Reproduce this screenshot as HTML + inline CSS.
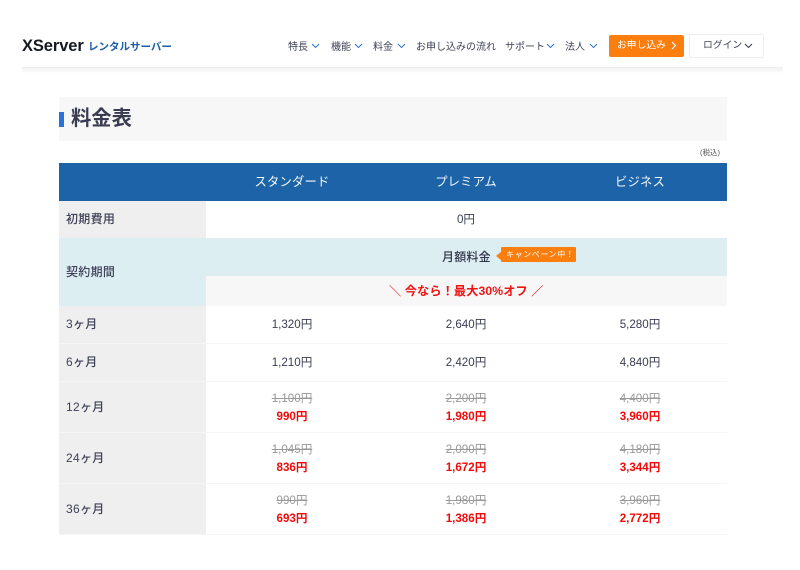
<!DOCTYPE html>
<html lang="ja"><head><meta charset="utf-8"><style>
html,body{margin:0;padding:0;background:#fff}
body{width:800px;height:570px;overflow:hidden;position:relative;font-family:"Liberation Sans","Noto Sans CJK JP",sans-serif;color:#3a3d52}
.a{position:absolute;white-space:nowrap}
.c{position:absolute;white-space:nowrap;text-align:center;width:174px;font-size:11.6px;line-height:18px;letter-spacing:0;margin-top:1px}
.b{position:absolute}
.n{font-size:10px;line-height:14px;top:41px;color:#3f4257}
.l{font-size:12px;line-height:18px;left:66px;font-weight:500;letter-spacing:.3px;color:#3f4257}
.o{color:#999;text-decoration:line-through}
.r{color:#f00a0a;font-weight:700}
.h{color:#f2f6fa;font-size:12.3px;line-height:18px;letter-spacing:.2px;top:172px}
svg{position:absolute;overflow:visible}
</style></head><body>
<div class="b" style="left:22px;top:67px;width:761px;height:1px;background:#eee"></div>
<div class="b" style="left:22px;top:68px;width:761px;height:6px;background:linear-gradient(#f3f3f3,#fff)"></div>
<div class="a" style="left:22px;top:36px;font-size:16.5px;line-height:20px;font-weight:700;color:#14181f;letter-spacing:-.1px">XServer</div>
<div class="a" style="left:88px;top:39px;font-size:10.5px;line-height:16px;font-weight:700;color:#1c5fa6;letter-spacing:0">レンタルサーバー</div>

<div class="a n" style="left:288px">特長</div>
<svg style="left:311px;top:43px" width="9" height="6"><path d="M1 1l3.5 3.5L8 1" fill="none" stroke="#2e78d6" stroke-width="1"/></svg>
<div class="a n" style="left:331px">機能</div>
<svg style="left:354px;top:43px" width="9" height="6"><path d="M1 1l3.5 3.5L8 1" fill="none" stroke="#2e78d6" stroke-width="1"/></svg>
<div class="a n" style="left:373px">料金</div>
<svg style="left:397px;top:43px" width="9" height="6"><path d="M1 1l3.5 3.5L8 1" fill="none" stroke="#2e78d6" stroke-width="1"/></svg>
<div class="a n" style="left:416px">お申し込みの流れ</div>
<div class="a n" style="left:505px">サポート</div>
<svg style="left:546px;top:43px" width="9" height="6"><path d="M1 1l3.5 3.5L8 1" fill="none" stroke="#2e78d6" stroke-width="1"/></svg>
<div class="a n" style="left:565px">法人</div>
<svg style="left:589px;top:43px" width="9" height="6"><path d="M1 1l3.5 3.5L8 1" fill="none" stroke="#2e78d6" stroke-width="1"/></svg>

<div class="b" style="left:609px;top:35px;width:75px;height:22px;background:#fb7e0e;border-radius:2px"></div>
<div class="a" style="left:617px;top:39px;font-size:9.8px;line-height:14px;color:#fff">お申し込み</div>
<svg style="left:671px;top:41px" width="6" height="9"><path d="M1 1l3.5 3.5L1 8" fill="none" stroke="#fff" stroke-width="1.1"/></svg>
<div class="b" style="left:689px;top:34px;width:73px;height:22px;background:#fff;border:1px solid #eee;border-radius:2px"></div>
<div class="a" style="left:703px;top:39px;font-size:9.8px;line-height:14px;color:#3f4257">ログイン</div>
<svg style="left:744px;top:43px" width="9" height="6"><path d="M1 1l3.5 3.5L8 1" fill="none" stroke="#3f4257" stroke-width="1.1"/></svg>

<div class="b" style="left:59px;top:97px;width:668px;height:44px;background:#f7f7f7"></div>
<div class="b" style="left:59px;top:112px;width:5px;height:15px;background:#2b72d8"></div>
<div class="a" style="left:71px;top:105px;font-size:20.3px;line-height:29px;font-weight:700;color:#3a3d52">料金表</div>
<div class="a" style="left:700px;top:148px;font-size:7.5px;line-height:10px;color:#555">(税込)</div>

<div class="b" style="left:59px;top:163px;width:668px;height:38px;background:#1c63a8"></div>
<div class="c h" style="left:205px">スタンダード</div>
<div class="c h" style="left:379px">プレミアム</div>
<div class="c h" style="left:553px">ビジネス</div>

<div class="b" style="left:59px;top:201px;width:147px;height:37px;background:#efefef"></div>
<div class="b" style="left:59px;top:238px;width:668px;height:38px;background:#ddeef3"></div>
<div class="b" style="left:59px;top:276px;width:147px;height:30px;background:#ddeef3"></div>
<div class="b" style="left:206px;top:276px;width:521px;height:30px;background:#f7f7f7"></div>
<div class="b" style="left:59px;top:306px;width:147px;height:229px;background:#efefef"></div>
<div class="b" style="left:59px;top:343px;width:668px;height:1px;background:#f5f5f5"></div>
<div class="b" style="left:59px;top:381px;width:668px;height:1px;background:#f5f5f5"></div>
<div class="b" style="left:59px;top:432px;width:668px;height:1px;background:#f5f5f5"></div>
<div class="b" style="left:59px;top:483px;width:668px;height:1px;background:#f5f5f5"></div>
<div class="b" style="left:59px;top:534px;width:668px;height:1px;background:#f5f5f5"></div>

<div class="a l" style="top:210px">初期費用</div>
<div class="a l" style="top:263px">契約期間</div>
<div class="a l" style="top:315px">3ヶ月</div>
<div class="a l" style="top:353px">6ヶ月</div>
<div class="a l" style="top:398px">12ヶ月</div>
<div class="a l" style="top:449px">24ヶ月</div>
<div class="a l" style="top:500px">36ヶ月</div>

<div class="c" style="left:379px;top:210px">0円</div>
<div class="a" style="left:442px;top:248px;font-size:12px;line-height:18px;font-weight:500;color:#33364b;letter-spacing:.2px">月額料金</div>
<div class="b" style="left:496px;top:252px;width:0;height:0;border:4px solid transparent;border-right:5px solid #fb7e0e;border-left:0"></div>
<div class="b" style="left:501px;top:247px;width:75px;height:15px;background:#fb7e0e;border-radius:1px"></div>
<div class="a" style="left:506px;top:249px;font-size:8px;line-height:11px;color:#fff;letter-spacing:.6px">キャンペーン中！</div>
<div class="a" style="left:389px;top:282px;font-size:12.2px;line-height:18px;font-weight:700;color:#f01414;letter-spacing:.1px">＼ 今なら！最大30%オフ ／</div>

<div class="c" style="left:205px;top:315px">1,320円</div><div class="c" style="left:379px;top:315px">2,640円</div><div class="c" style="left:553px;top:315px">5,280円</div>
<div class="c" style="left:205px;top:353px">1,210円</div><div class="c" style="left:379px;top:353px">2,420円</div><div class="c" style="left:553px;top:353px">4,840円</div>

<div class="c o" style="left:205px;top:389px">1,100円</div><div class="c o" style="left:379px;top:389px">2,200円</div><div class="c o" style="left:553px;top:389px">4,400円</div>
<div class="c r" style="left:205px;top:407px">990円</div><div class="c r" style="left:379px;top:407px">1,980円</div><div class="c r" style="left:553px;top:407px">3,960円</div>

<div class="c o" style="left:205px;top:440px">1,045円</div><div class="c o" style="left:379px;top:440px">2,090円</div><div class="c o" style="left:553px;top:440px">4,180円</div>
<div class="c r" style="left:205px;top:458px">836円</div><div class="c r" style="left:379px;top:458px">1,672円</div><div class="c r" style="left:553px;top:458px">3,344円</div>

<div class="c o" style="left:205px;top:491px">990円</div><div class="c o" style="left:379px;top:491px">1,980円</div><div class="c o" style="left:553px;top:491px">3,960円</div>
<div class="c r" style="left:205px;top:509px">693円</div><div class="c r" style="left:379px;top:509px">1,386円</div><div class="c r" style="left:553px;top:509px">2,772円</div>
</body></html>
